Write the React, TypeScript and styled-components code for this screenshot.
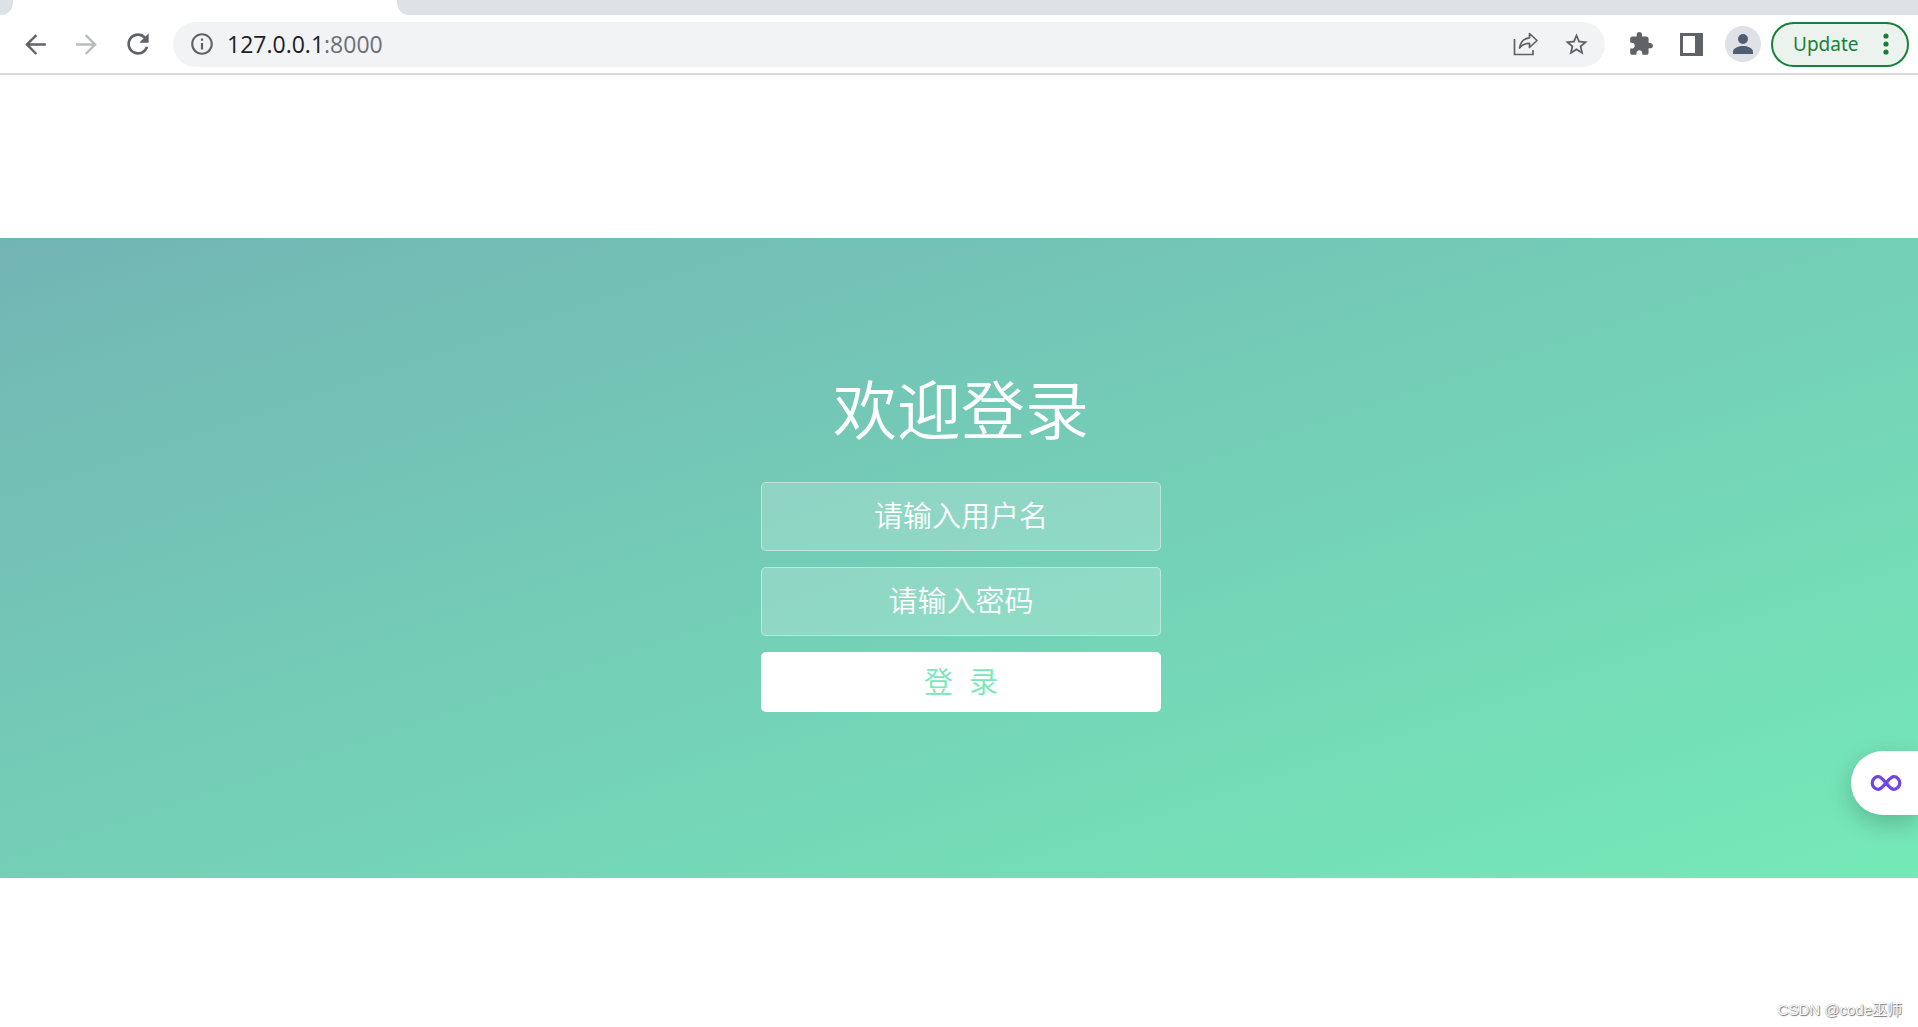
import React from "react";
import styled, { createGlobalStyle } from "styled-components";

const cjk = `"Liberation Sans", "Noto Sans CJK SC", sans-serif`;
const chromeFont = `"Open Sans", "Noto Sans", sans-serif`;

const GlobalStyle = createGlobalStyle`
  *, *::before, *::after { box-sizing: border-box; }
  body { margin: 0; background: #fff; font-family: ${cjk}; }
  button, input { font: inherit; margin: 0; }
`;

const Page = styled.div`
  position: relative;
  display: flex;
  flex-direction: column;
  min-height: 100vh;
  overflow: hidden;
`;

const TabStrip = styled.div`
  display: flex;
  height: 15px;
`;

const StripStart = styled.div`
  width: 13px;
  background: #dee1e6;
  border-bottom-right-radius: 12px;
`;

const ActiveTab = styled.div`
  width: 384px;
`;

const StripEnd = styled.div`
  flex: 1;
  background: #dee1e6;
  border-bottom-left-radius: 12px;
`;

const Toolbar = styled.header`
  display: flex;
  align-items: center;
  height: 60px;
  padding: 0 9px 0 10px;
  border-bottom: 2px solid #d9dadc;
  font-family: ${chromeFont};
`;

const IconButton = styled.button<{ $dim?: boolean }>`
  display: flex;
  align-items: center;
  justify-content: center;
  width: 51px;
  height: 44px;
  padding: 0;
  border: 0;
  background: none;
  color: ${(p) => (p.$dim ? "#babcbe" : "#5f6368")};
  cursor: pointer;
`;

const AddressBar = styled.div`
  display: flex;
  flex: 1;
  align-items: center;
  height: 45px;
  margin: 0 10px;
  padding: 0 3px;
  border-radius: 23px;
  background: #f1f3f4;
`;

const Address = styled.a`
  flex: 1;
  color: #202124;
  font-size: 23px;
  line-height: 30px;
  text-decoration: none;
`;

const Port = styled.span`
  color: #6b6f74;
`;

const Avatar = styled.button`
  display: flex;
  align-items: center;
  justify-content: center;
  width: 36px;
  height: 36px;
  margin: 0 10px 0 8px;
  padding: 0;
  border: 0;
  border-radius: 50%;
  background: #dee1e6;
  color: #525d70;
`;

const UpdateButton = styled.button`
  display: flex;
  align-items: center;
  justify-content: space-between;
  width: 138px;
  height: 45px;
  padding: 0 18px 0 20px;
  border: 2px solid #188038;
  border-radius: 23px;
  background: #ecf3ee;
  color: #188038;
  font-family: "Noto Sans", sans-serif;
  font-size: 19px;
`;

const Hero = styled.main`
  display: flex;
  flex-direction: column;
  align-items: center;
  margin-top: 163px;
  padding: 132px 0 166px 4px;
  background: linear-gradient(to bottom right, #73b5b5, #75e9b8);
`;

const Title = styled.h1`
  margin: 0 0 28px;
  color: #fff;
  font-size: 64px;
  font-weight: 350;
  line-height: 84px;
`;

const LoginForm = styled.form`
  display: flex;
  flex-direction: column;
  gap: 16px;
  width: 400px;
  font-size: 29px;
  font-weight: 350;
`;

const Field = styled.input`
  width: 100%;
  height: 69px;
  padding: 2px 24px 0;
  border: 1px solid rgba(255, 255, 255, 0.4);
  border-radius: 5px;
  outline: 0;
  background: rgba(255, 255, 255, 0.2);
  color: #fff;
  text-align: center;

  &::placeholder {
    color: #fff;
    opacity: 1;
  }
`;

const Submit = styled.button`
  height: 60px;
  padding: 0 0 4px;
  border: 0;
  border-radius: 5px;
  background: #fff;
  color: #75e9b8;
  white-space: pre;
  cursor: pointer;
`;

const FloatingButton = styled.button`
  position: absolute;
  top: 751px;
  right: 0;
  display: flex;
  align-items: center;
  width: 67px;
  height: 64px;
  padding: 0 0 0 19px;
  border: 0;
  border-radius: 32px 0 0 32px;
  background: #fff;
  box-shadow: 0 8px 24px rgba(0, 0, 0, 0.2);
`;

const Watermark = styled.div`
  position: absolute;
  right: 16px;
  bottom: 7px;
  color: #fff;
  font-size: 15px;
  line-height: 20px;
  text-shadow: 1px 1px 1px #777, 0 0 1px #888;
`;

const Material = ({ d, size }: { d: string; size: number }) => (
  <svg width={size} height={size} viewBox="0 0 24 24" fill="currentColor" aria-hidden="true">
    <path d={d} />
  </svg>
);

const paths = {
  back: "M20 11.1H7.6l5.7-5.7L12 4.1 4 12l8 8 1.3-1.3-5.7-5.8H20z",
  forward: "M4 11.1h12.4l-5.7-5.7L12 4.1l8 7.9-8 8-1.3-1.3 5.7-5.8H4z",
  reload:
    "M17.65 6.35C16.2 4.9 14.21 4 12 4c-4.42 0-7.99 3.58-7.99 8s3.57 8 7.99 8c3.73 0 6.84-2.55 7.73-6h-2.08c-.82 2.33-3.04 4-5.65 4-3.31 0-6-2.69-6-6s2.69-6 6-6c1.66 0 3.14.69 4.22 1.78L13 11h7V4l-2.35 2.35z",
  info: "M11 7h2v2h-2zm0 4h2v6h-2zm1-9C6.48 2 2 6.48 2 12s4.48 10 10 10 10-4.48 10-10S17.52 2 12 2zm0 18c-4.41 0-8-3.59-8-8s3.59-8 8-8 8 3.59 8 8-3.59 8-8 8z",
  star: "M22 9.24l-7.19-.62L12 2 9.19 8.63 2 9.24l5.46 4.73L5.82 21 12 17.27 18.18 21l-1.63-7.03L22 9.24zM12 15.4l-3.76 2.27 1-4.28-3.32-2.88 4.38-.38L12 6.1l1.71 4.04 4.38.38-3.32 2.88 1 4.28L12 15.4z",
  puzzle:
    "M20.5 11H19V7c0-1.1-.9-2-2-2h-4V3.5C13 2.12 11.88 1 10.5 1S8 2.12 8 3.5V5H4c-1.1 0-1.99.9-1.99 2v3.8H3.5c1.49 0 2.7 1.21 2.7 2.7s-1.21 2.7-2.7 2.7H2V20c0 1.1.9 2 2 2h3.8v-1.5c0-1.49 1.21-2.7 2.7-2.7 1.49 0 2.7 1.21 2.7 2.7V22H17c1.1 0 2-.9 2-2v-4h1.5c1.38 0 2.5-1.12 2.5-2.5S21.88 11 20.5 11z",
};

export default function App() {
  return (
    <>
      <GlobalStyle />
      <Page>
        <TabStrip>
          <StripStart />
          <ActiveTab />
          <StripEnd />
        </TabStrip>

        <Toolbar>
          <IconButton aria-label="Back">
            <Material d={paths.back} size={31} />
          </IconButton>
          <IconButton $dim aria-label="Forward">
            <Material d={paths.forward} size={31} />
          </IconButton>
          <IconButton aria-label="Reload">
            <Material d={paths.reload} size={32} />
          </IconButton>

          <AddressBar>
            <IconButton aria-label="Site information">
              <Material d={paths.info} size={26} />
            </IconButton>
            <Address href="#">
              127.0.0.1<Port>:8000</Port>
            </Address>
            <IconButton aria-label="Share">
              <svg width="26" height="24" viewBox="0 0 26 24" fill="none" stroke="currentColor" strokeWidth="1.7" aria-hidden="true">
                <path d="M1.500 7v15.500h18.500V18" />
                <path d="M16.500 1.500l7.500 7-7.500 7v-4.200c-4.500 0-7.500 1.300-10 4.700.8-5.500 4-9.700 10-10.200z" strokeLinejoin="round" />
              </svg>
            </IconButton>
            <IconButton aria-label="Bookmark">
              <Material d={paths.star} size={27} />
            </IconButton>
          </AddressBar>

          <IconButton aria-label="Extensions">
            <Material d={paths.puzzle} size={26} />
          </IconButton>
          <IconButton aria-label="Side panel">
            <svg width="23" height="23" viewBox="0 0 23 23" aria-hidden="true">
              <path d="M0 0h23v23H0zM3 3v17h12V3z" fill="currentColor" fillRule="evenodd" />
            </svg>
          </IconButton>
          <Avatar aria-label="Profile">
            <svg width="20" height="20" viewBox="0 0 20 20" fill="currentColor" aria-hidden="true">
              <circle cx="10" cy="5" r="5" />
              <path d="M0 20v-2.500c0-3.500 6-5.500 10-5.500s10 2 10 5.500V20z" />
            </svg>
          </Avatar>
          <UpdateButton>
            Update
            <svg width="6" height="22" viewBox="0 0 6 22" fill="currentColor" aria-hidden="true">
              <circle cx="3" cy="3" r="2.600" />
              <circle cx="3" cy="11" r="2.600" />
              <circle cx="3" cy="19" r="2.600" />
            </svg>
          </UpdateButton>
        </Toolbar>

        <Hero>
          <Title>欢迎登录</Title>
          <LoginForm onSubmit={(e) => e.preventDefault()}>
            <Field type="text" aria-label="用户名" placeholder="请输入用户名" />
            <Field type="password" aria-label="密码" placeholder="请输入密码" />
            <Submit type="submit">{"登\u00a0 录"}</Submit>
          </LoginForm>
        </Hero>

        <FloatingButton aria-label="Assistant">
          <svg width="32" height="18" viewBox="0 0 34 20" fill="none" stroke="#7145e0" strokeWidth="3.600" aria-hidden="true">
            <path d="M17 10C14 6.500 11.500 3 8.300 3a6.600 7 0 0 0 0 14C11.500 17 14 13.500 17 10s5.500-7 8.700-7a6.600 7 0 0 1 0 14C22.500 17 20 13.500 17 10z" />
          </svg>
        </FloatingButton>
        <Watermark>CSDN @code巫师</Watermark>
      </Page>
    </>
  );
}
